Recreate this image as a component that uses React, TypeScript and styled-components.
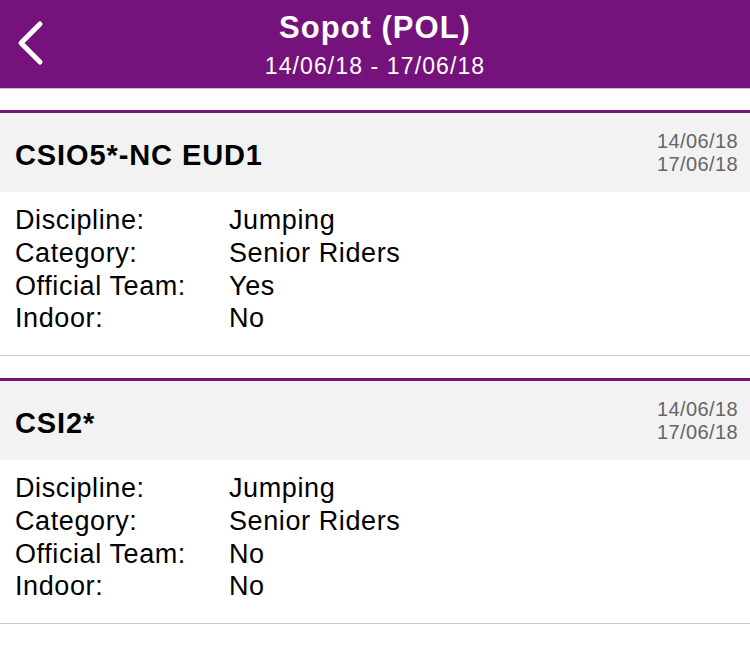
import React from "react";
import styled, { createGlobalStyle } from "styled-components";

const purple = "#76127b";

const GlobalStyle = createGlobalStyle`
  html, body {
    margin: 0;
    padding: 0;
    background: #fff;
  }
  body {
    font-family: "Liberation Sans", Arial, sans-serif;
    color: #000;
  }
`;

const Page = styled.div`
  width: 750px;
  min-height: 645px;
  background: #fff;
`;

const NavBar = styled.header`
  position: relative;
  box-sizing: border-box;
  height: 89px;
  padding-top: 10px;
  background: ${purple};
  border-bottom: 1px solid #c4c4c4;
  display: flex;
  flex-direction: column;
  align-items: center;
  gap: 6px;
  color: #fff;
`;

const BackButton = styled.button`
  position: absolute;
  left: 12px;
  top: 20px;
  width: 36px;
  height: 46px;
  padding: 0;
  border: none;
  background: transparent;
  display: flex;
  align-items: center;
  justify-content: center;
`;

const NavTitle = styled.h1`
  margin: 0;
  font-size: 31px;
  font-weight: 700;
  letter-spacing: 1px;
  line-height: 36px;
`;

const NavSubtitle = styled.div`
  font-size: 23px;
  letter-spacing: 1.1px;
  line-height: 28px;
`;

const List = styled.main`
  padding-top: 21px;
  display: flex;
  flex-direction: column;
  gap: 22px;
`;

const Card = styled.section`
  border-top: 3px solid ${purple};
  border-bottom: 1px solid #cccccc;
`;

const CardHead = styled.div`
  height: 79px;
  background: #f2f2f2;
  display: flex;
  align-items: center;
  justify-content: space-between;
  padding: 0 12px 0 15px;
`;

const CardTitle = styled.h2`
  margin: 0;
  padding-top: 5px;
  font-size: 29px;
  font-weight: 700;
  letter-spacing: 0.9px;
`;

const Dates = styled.div`
  text-align: right;
  font-size: 20px;
  letter-spacing: 0.4px;
  line-height: 23px;
  color: #656565;
`;

const CardBody = styled.dl`
  margin: 0;
  padding: 12px 15px 20px;
  display: grid;
  grid-template-columns: 214px 1fr;
  font-size: 27px;
  letter-spacing: 0.6px;
  line-height: 32.75px;
`;

const Term = styled.dt`
  margin: 0;
`;

const Value = styled.dd`
  margin: 0;
`;

type Event = {
  name: string;
  from: string;
  to: string;
  fields: [string, string][];
};

const events: Event[] = [
  {
    name: "CSIO5*-NC EUD1",
    from: "14/06/18",
    to: "17/06/18",
    fields: [
      ["Discipline:", "Jumping"],
      ["Category:", "Senior Riders"],
      ["Official Team:", "Yes"],
      ["Indoor:", "No"],
    ],
  },
  {
    name: "CSI2*",
    from: "14/06/18",
    to: "17/06/18",
    fields: [
      ["Discipline:", "Jumping"],
      ["Category:", "Senior Riders"],
      ["Official Team:", "No"],
      ["Indoor:", "No"],
    ],
  },
];

const App = () => {
  return (
    <Page>
      <GlobalStyle />
      <NavBar>
        <BackButton aria-label="Back">
          <svg width="30" height="46" viewBox="0 0 30 46">
            <polyline
              points="25,4 6,23 25,42"
              fill="none"
              stroke="#fff"
              strokeWidth="5"
              strokeLinecap="round"
              strokeLinejoin="round"
            />
          </svg>
        </BackButton>
        <NavTitle>Sopot (POL)</NavTitle>
        <NavSubtitle>14/06/18 - 17/06/18</NavSubtitle>
      </NavBar>

      <List>
        {events.map((ev) => (
          <Card key={ev.name}>
            <CardHead>
              <CardTitle>{ev.name}</CardTitle>
              <Dates>
                {ev.from}
                <br />
                {ev.to}
              </Dates>
            </CardHead>
            <CardBody>
              {ev.fields.map(([k, v]) => (
                <React.Fragment key={k}>
                  <Term>{k}</Term>
                  <Value>{v}</Value>
                </React.Fragment>
              ))}
            </CardBody>
          </Card>
        ))}
      </List>
    </Page>
  );
};

export default App;
